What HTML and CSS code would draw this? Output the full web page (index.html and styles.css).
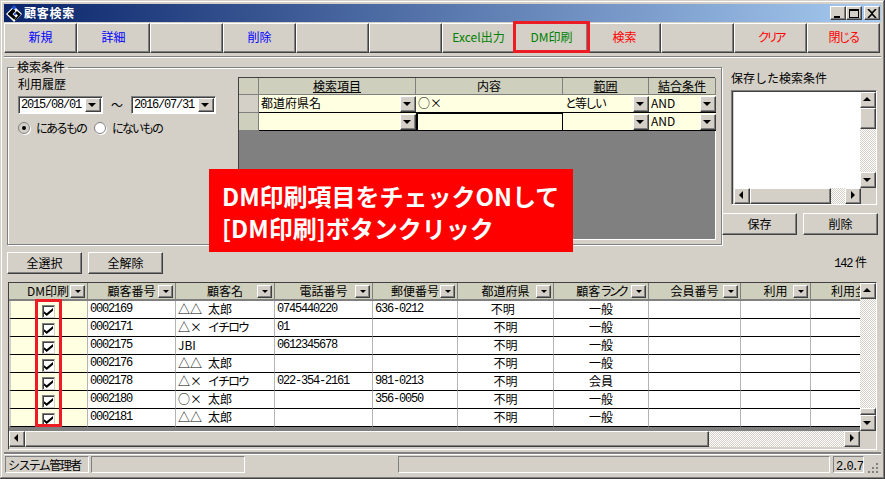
FILE: index.html
```html
<!DOCTYPE html>
<html lang="ja">
  <head>
    <meta charset="utf-8">
    <title>顧客検索</title>
    <link rel="stylesheet" href="styles.css">
  </head>

  <body>
    <div class="window">
      <div class="titlebar">
        <svg class="app-icon" width="16" height="17" viewBox="0 0 16 17">
          <path d="M8 1 16 9 8 17 0 9Z" fill="#fff"/>
          <path d="M1.5 9 7 3.5 9.5 6 6.5 9 10 12.5 8 14.5Z" fill="#000"/>
          <path d="M9 8 11 6 15 9.5 9.5 15.5 8.5 14.5 12 10.5Z" fill="#000"/>
          <path d="M8 0 10.5 2.5 8 5 5.5 2.5Z" fill="#1c4fd0"/>
          <path d="M7.5 9 9 7.5 10.5 9 9 10.5Z" fill="#1c4fd0"/>
        </svg>
        <span class="title-text">顧客検索</span>
        <div class="win-btns">
          <button class="win-btn"><i class="ico-min"></i></button>
          <button class="win-btn"><i class="ico-max"></i></button>
          <button class="win-btn win-close">
            <svg width="10" height="9" viewBox="0 0 10 9"><path d="M1 0 5 4 9 0M1 9 5 5 9 9" fill="none" stroke="#000" stroke-width="1.6"/></svg>
          </button>
        </div>
      </div>

      <div class="toolbar">
        <button class="btn blue">新規</button>
        <button class="btn blue">詳細</button>
        <button class="btn"></button>
        <button class="btn blue">削除</button>
        <button class="btn"></button>
        <button class="btn"></button>
        <button class="btn green">Excel出力</button>
        <button class="btn green marked">DM印刷</button>
        <button class="btn red">検索</button>
        <button class="btn"></button>
        <button class="btn red"><span class="tighter">クリア</span></button>
        <button class="btn red"><span class="tight">閉じる</span></button>
      </div>
      <div class="rule"></div>

      <div class="search">
        <fieldset class="group">
          <legend>検索条件</legend>
          <div class="history">
            <div class="history-label">利用履歴</div>
            <div class="dates">
              <div class="combo"><span class="num">2015/08/01</span><span class="sb-btn down"></span></div>
              <span class="tilde">～</span>
              <div class="combo"><span class="num">2016/07/31</span><span class="sb-btn down"></span></div>
            </div>
            <div class="radios">
              <span class="radio on"></span><span class="radio-text tight">にあるもの</span>
              <span class="radio"></span><span class="radio-text tight">にないもの</span>
            </div>
          </div>
          <div class="qgrid">
            <div class="qhead"></div>
            <div class="qhead"><u>検索項目</u></div>
            <div class="qhead">内容</div>
            <div class="qhead"><u>範囲</u></div>
            <div class="qhead"><u>結合条件</u></div>

            <div class="qrowhead"></div>
            <div class="qcell">都道府県名<span class="sb-btn down"></span></div>
            <div class="qcell">○×</div>
            <div class="qcell"><span class="tight">と等しい</span><span class="sb-btn down"></span></div>
            <div class="qcell">AND<span class="sb-btn down"></span></div>

            <div class="qrowhead alt"></div>
            <div class="qcell"><span class="sb-btn down"></span></div>
            <div class="qcell focus"></div>
            <div class="qcell"><span class="sb-btn down"></span></div>
            <div class="qcell">AND<span class="sb-btn down"></span></div>
          </div>
        </fieldset>

        <div class="saved">
          <div class="saved-label">保存した検索条件</div>
          <div class="listbox">
            <div class="list-top">
              <div class="list-white"></div>
              <div class="vscroll">
                <span class="sb-btn up"></span>
                <span class="sb-thumb list-thumb"></span>
                <span class="sb-track"></span>
                <span class="sb-btn down"></span>
              </div>
            </div>
            <div class="hscroll">
              <span class="sb-btn left"></span>
              <span class="sb-thumb list-hthumb"></span>
              <span class="sb-track"></span>
              <span class="sb-btn right"></span>
            </div>
          </div>
          <div class="saved-btns">
            <button class="btn">保存</button>
            <button class="btn">削除</button>
          </div>
        </div>
      </div>

      <div class="actions">
        <button class="btn">全選択</button>
        <button class="btn">全解除</button>
        <span class="count"><span class="num">142</span> 件</span>
      </div>

      <div class="table-frame">
        <div class="table-top">
          <div class="view">
            <table class="customers">
              <colgroup>
                <col class="c1"><col class="c2"><col class="c3"><col class="c4"><col class="c5">
                <col class="c6"><col class="c7"><col class="c8"><col class="c9"><col class="c10">
              </colgroup>
              <thead>
                <tr>
                  <th>DM印刷<i class="sort"></i></th>
                  <th>顧客番号<i class="sort"></i></th>
                  <th>顧客名<i class="sort"></i></th>
                  <th>電話番号<i class="sort"></i></th>
                  <th>郵便番号<i class="sort"></i></th>
                  <th>都道府県<i class="sort"></i></th>
                  <th>顧客<span class="tighter">ランク</span><i class="sort"></i></th>
                  <th>会員番号<i class="sort"></i></th>
                  <th>利用<i class="sort"></i></th>
                  <th>利用金額</th>
                </tr>
              </thead>
              <tbody>
                <tr>
                  <td class="chk"><span class="checkbox"></span></td>
                  <td class="num">0002169</td><td>△△&ensp;太郎</td><td class="num">0745440220</td><td class="num">636-0212</td>
                  <td class="mid">不明&nbsp;&nbsp;</td><td class="mid">一般</td><td></td><td></td><td></td>
                </tr>
                <tr>
                  <td class="chk"><span class="checkbox"></span></td>
                  <td class="num">0002171</td><td>△×&ensp;<span class="tight">イチロウ</span></td><td class="num">01</td><td></td>
                  <td class="mid">不明</td><td class="mid">一般</td><td></td><td></td><td></td>
                </tr>
                <tr>
                  <td class="chk"><span class="checkbox"></span></td>
                  <td class="num">0002175</td><td>JBI</td><td class="num">0612345678</td><td></td>
                  <td class="mid">不明</td><td class="mid">一般</td><td></td><td></td><td></td>
                </tr>
                <tr>
                  <td class="chk"><span class="checkbox"></span></td>
                  <td class="num">0002176</td><td>△△&ensp;太郎</td><td></td><td></td>
                  <td class="mid">不明</td><td class="mid">一般</td><td></td><td></td><td></td>
                </tr>
                <tr>
                  <td class="chk"><span class="checkbox"></span></td>
                  <td class="num">0002178</td><td>△×&ensp;<span class="tight">イチロウ</span></td><td class="num">022-354-2161</td><td class="num">981-0213</td>
                  <td class="mid">不明</td><td class="mid">会員</td><td></td><td></td><td></td>
                </tr>
                <tr>
                  <td class="chk"><span class="checkbox"></span></td>
                  <td class="num">0002180</td><td>○×&ensp;太郎</td><td></td><td class="num">356-0050</td>
                  <td class="mid">不明</td><td class="mid">一般</td><td></td><td></td><td></td>
                </tr>
                <tr>
                  <td class="chk"><span class="checkbox"></span></td>
                  <td class="num">0002181</td><td>△△&ensp;太郎</td><td></td><td></td>
                  <td class="mid">不明</td><td class="mid">一般</td><td></td><td></td><td></td>
                </tr>
              </tbody>
            </table>
            <div class="check-mark"></div>
          </div>
          <div class="vscroll">
            <span class="sb-btn up"></span>
            <span class="sb-track"></span>
            <span class="sb-thumb table-thumb"></span>
            <span class="sb-btn down"></span>
          </div>
        </div>
        <div class="hscroll">
          <span class="sb-btn left"></span>
          <span class="sb-thumb table-hthumb"></span>
          <span class="sb-track"></span>
          <span class="sb-btn right"></span>
          <span class="corner"></span>
        </div>
      </div>

      <div class="statusbar">
        <div class="panel p-user"><span class="status-text">システム管理者</span></div>
        <div class="panel p-a"></div>
        <div class="panel p-c"></div>
        <div class="panel p-ver"><span class="num">2.0.7</span></div>
        <div class="grip"></div>
      </div>

      <div class="callout">DM印刷項目をチェックONして<br>[DM印刷]ボタンクリック</div>
    </div>
  </body>
</html>
```

FILE: styles.css
```css
* {
  box-sizing: border-box;
}
body {
  margin: 0;
  background: #d4d0c8;
  font-family: "Noto Sans CJK JP", "Liberation Sans", sans-serif;
  font-size: 12px;
  line-height: 14px;
  color: #000;
}
.num {
  font-family: "Liberation Mono", "Noto Sans CJK JP", monospace;
  letter-spacing: -1.2px;
}
.tight {
  letter-spacing: -2px;
}
.tighter {
  letter-spacing: -3.5px;
}

/* window */
.window {
  position: relative;
  width: 885px;
  height: 479px;
  padding: 4px;
  display: flex;
  flex-direction: column;
  background: #d4d0c8;
  box-shadow: inset -1px -1px #404040, inset 1px 1px #d4d0c8, inset -2px -2px #808080, inset 2px 2px #fff;
  overflow: hidden;
}
.titlebar {
  height: 18px;
  flex-shrink: 0;
  display: flex;
  align-items: center;
  padding: 0 1px 0 2px;
  background: linear-gradient(to right, #0a246a, #a6caf0);
}
.app-icon {
  margin-right: 2px;
}
.title-text {
  color: #fff;
  font-weight: bold;
  letter-spacing: 0.75px;
}
.win-btns {
  margin-left: auto;
  display: flex;
}
.win-btn {
  width: 16px;
  height: 14px;
  padding: 0;
  display: flex;
  align-items: center;
  justify-content: center;
  background: #d4d0c8;
  border: 1px solid;
  border-color: #fff #404040 #404040 #fff;
  box-shadow: inset -1px -1px #808080;
}
.win-close {
  margin-left: 2px;
}
.ico-min {
  width: 6px;
  height: 2px;
  margin-top: 7px;
  margin-right: 2px;
  background: #000;
}
.ico-max {
  width: 10px;
  height: 9px;
  border: 1px solid #000;
  border-top-width: 2px;
}

/* buttons */
.btn {
  padding: 0;
  background: #d4d0c8;
  font: inherit;
  color: #000;
  border: 1px solid;
  border-color: #fff #404040 #404040 #fff;
  box-shadow: inset -1px -1px #808080;
}
.blue { color: #0000ff; }
.green { color: #008000; }
.red { color: #ff0000; }

.toolbar {
  margin-top: 1px;
  display: grid;
  grid-template-columns: repeat(12, 73px);
  height: 30px;
  flex-shrink: 0;
}
.toolbar .btn {
  padding-bottom: 2px;
}
.marked {
  position: relative;
}
.marked::after {
  content: "";
  position: absolute;
  left: -3px;
  right: -3px;
  top: -3px;
  bottom: -1px;
  border: 3px solid #ed1c24;
}
.rule {
  margin-top: 3px;
  height: 2px;
  flex-shrink: 0;
  border-top: 1px solid #808080;
  border-bottom: 1px solid #fff;
}

/* search area */
.search {
  display: flex;
  align-items: flex-start;
  height: 188px;
  flex-shrink: 0;
  padding: 2px 0 0 3px;
}
.group {
  width: 715px;
  height: 185px;
  margin: 0;
  padding: 3px 6px 6px 10px;
  display: flex;
  flex-shrink: 0;
  border: 1px solid #808080;
  box-shadow: inset 1px 1px #fff, 1px 1px #fff;
}
.group legend {
  margin-left: -4px;
  padding: 0 3px;
  line-height: 14px;
}
.history {
  width: 220px;
}
.history-label {
  height: 14px;
}
.dates {
  margin-top: 5px;
  display: flex;
  align-items: center;
}
.combo {
  width: 85px;
  height: 18px;
  padding: 0 1px 0 2px;
  display: flex;
  align-items: center;
  justify-content: space-between;
  background: #fff;
  border: 1px solid;
  border-color: #808080 #fff #fff #808080;
  box-shadow: inset 1px 1px #404040;
}
.combo .sb-btn {
  height: 14px;
}
.tilde {
  width: 28px;
  text-align: center;
}
.radios {
  margin-top: 7px;
  display: flex;
  align-items: center;
}
.radio {
  position: relative;
  flex-shrink: 0;
  width: 12px;
  height: 12px;
  border-radius: 50%;
  background: #fff;
  border: 1px solid #808080;
  box-shadow: 1px 1px #fff;
}
.radio.on {
  background: #d4d0c8;
}
.radio.on::after {
  content: "";
  position: absolute;
  left: 3px;
  top: 3px;
  width: 4px;
  height: 4px;
  border-radius: 50%;
  background: #000;
}
.radio-text {
  margin-left: 6px;
  width: 58px;
  white-space: nowrap;
}

/* condition grid */
.qgrid {
  width: 477px;
  height: 162px;
  display: grid;
  grid-template-columns: 20px 157px 147px 86px 67px;
  grid-template-rows: 17px 18px 18px;
  align-content: start;
  background: #808080;
  border-top: 1px solid #404040;
  border-left: 1px solid #404040;
  box-shadow: 1px 1px #fff;
}
.qhead {
  background: #cfcfbd;
  text-align: center;
  line-height: 16px;
  border-right: 1px solid #808080;
  border-bottom: 1px solid #808080;
}
.qrowhead {
  background: #d4d0c8;
  border-right: 1px solid #808080;
  border-bottom: 1px solid #808080;
}
.qrowhead.alt {
  background: #cfcfbd;
}
.qcell {
  display: flex;
  align-items: center;
  justify-content: space-between;
  padding: 0 0 2px 2px;
  background: #ffffe1;
  border-bottom: 1px solid #000;
  line-height: 14px;
}
.qcell .sb-btn {
  margin: 0 0 -2px auto;
}
.qcell.focus {
  border: 1px solid #000;
  border-left-width: 2px;
}

/* saved conditions */
.saved {
  width: 156px;
  margin-top: 11px;
  display: flex;
  flex-direction: column;
  align-items: flex-end;
  flex-shrink: 0;
}
.saved-label {
  width: 146px;
  height: 14px;
  margin-right: 1px;
  white-space: nowrap;
}
.listbox {
  width: 146px;
  height: 115px;
  margin: 5px 1px 0 0;
  padding: 1px 0 1px 1px;
  border: 1px solid;
  border-color: #808080 #fff #fff #808080;
  box-shadow: inset 1px 1px #404040;
}
.list-top {
  display: flex;
  height: 96px;
  margin-left: 1px;
}
.list-white {
  flex: 1;
  background: #fff;
}
.saved-btns {
  width: 156px;
  margin-top: 8px;
  display: flex;
  justify-content: space-between;
}
.saved-btns .btn {
  width: 75px;
  height: 22px;
}

/* scrollbars */
.vscroll {
  width: 16px;
  flex-shrink: 0;
  display: flex;
  flex-direction: column;
}
.hscroll {
  height: 16px;
  flex-shrink: 0;
  display: flex;
}
.sb-btn, .sb-thumb, .sort {
  display: block;
  background: #d4d0c8;
  border: 1px solid;
  border-color: #fff #404040 #404040 #fff;
  box-shadow: inset -1px -1px #808080;
}
.sb-btn {
  position: relative;
  width: 16px;
  height: 16px;
  flex-shrink: 0;
}
.sb-btn::after {
  content: "";
  position: absolute;
  left: 50%;
  top: 50%;
  width: 0;
  height: 0;
  border: 4px solid transparent;
}
.sb-btn.down::after {
  margin: -2px 0 0 -5px;
  border-top-color: #000;
  border-bottom-width: 0;
}
.sb-btn.up::after {
  margin: -3px 0 0 -5px;
  border-bottom-color: #000;
  border-top-width: 0;
}
.sb-btn.left::after {
  margin: -5px 0 0 -3px;
  border-right-color: #000;
  border-left-width: 0;
}
.sb-btn.right::after {
  margin: -5px 0 0 -2px;
  border-left-color: #000;
  border-right-width: 0;
}
.sb-track {
  flex: 1;
  background: repeating-conic-gradient(#d4d0c8 0 25%, #fff 0 50%) 0 0 / 2px 2px;
}
.list-thumb {
  height: 21px;
}
.list-hthumb {
  width: 81px;
}
.table-thumb {
  height: 7px;
}
.table-hthumb {
  width: 684px;
}
.list-top + .hscroll {
  width: 127px;
  margin-left: 1px;
}

/* actions */
.actions {
  height: 22px;
  flex-shrink: 0;
  margin-top: 6px;
  padding-left: 3px;
  display: flex;
}
.actions .btn {
  width: 75px;
  margin-right: 6px;
}
.count {
  margin-left: auto;
  margin-right: 14px;
  align-self: center;
}

/* customer table */
.table-frame {
  width: 869px;
  height: 168px;
  margin: 8px 0 0 4px;
  flex-shrink: 0;
  border: 1px solid;
  border-color: #404040 #fff #fff #404040;
}
.table-top {
  display: flex;
  height: 148px;
}
.view {
  position: relative;
  width: 851px;
  overflow: hidden;
  background: #808080;
}
.customers {
  width: 891px;
  table-layout: fixed;
  border-collapse: separate;
  border-spacing: 0;
}
.c1 { width: 79px; }
.c2 { width: 88px; }
.c3 { width: 99px; }
.c4 { width: 98px; }
.c5 { width: 85px; }
.c6 { width: 96px; }
.c7 { width: 95px; }
.c8 { width: 92px; }
.c9 { width: 70px; }
.c10 { width: 89px; }
.customers th {
  position: relative;
  height: 18px;
  padding: 0;
  background: #cfcfbd;
  font-weight: normal;
  text-align: center;
  white-space: nowrap;
  border-right: 1px solid #808080;
  border-bottom: 2px solid #808080;
}
.sort {
  position: absolute;
  right: 2px;
  top: 2px;
  width: 15px;
  height: 13px;
}
.sort::after {
  content: "";
  position: absolute;
  left: 4px;
  top: 4px;
  border: 3px solid transparent;
  border-top-color: #000;
  border-bottom-width: 0;
}
.customers td {
  height: 18px;
  padding: 0 0 2px 2px;
  background: #fff;
  white-space: nowrap;
  overflow: hidden;
  border-right: 1px solid #b4b4b4;
  border-bottom: 1px solid #000;
}
.customers td.num {
  padding-bottom: 1px;
}
.customers td.mid {
  text-align: center;
  padding: 0 0 2px;
}
.customers td.chk {
  padding: 0;
  background: #ffffe1;
  border-left: 2px solid #d4d0c8;
  vertical-align: top;
}
.checkbox {
  display: block;
  position: relative;
  width: 13px;
  height: 13px;
  margin: 4px 0 0 31px;
  background: #fff;
  border: 1px solid #808080;
  border-right-color: #d4d0c8;
  border-bottom-color: #d4d0c8;
  box-shadow: inset 1px 1px #404040;
}
.checkbox::after {
  content: "";
  position: absolute;
  left: 1px;
  top: 2px;
  width: 9px;
  height: 8px;
  background: #000;
  clip-path: polygon(0 40%, 30% 65%, 100% 0, 100% 35%, 30% 100%, 0 70%);
}
.check-mark {
  position: absolute;
  left: 26px;
  top: 16px;
  width: 27px;
  height: 128px;
  border: 3px solid #ed1c24;
}
.corner {
  width: 16px;
  background: #d4d0c8;
}

/* status bar */
.statusbar {
  margin-top: 2px;
  padding-top: 2px;
  flex-shrink: 0;
  display: flex;
  align-items: flex-start;
  height: 21px;
  border-top: 2px solid #808080;
  border-top-style: double;
  box-shadow: inset 0 1px #fff;
}
.panel {
  height: 17px;
  line-height: 15px;
  padding-left: 2px;
  white-space: nowrap;
  border: 1px solid;
  border-color: #808080 #fff #fff #808080;
}
.status-text {
  letter-spacing: -1.6px;
}
.p-user { width: 84px; margin-left: 1px; margin-right: 2px; }
.p-a { width: 154px; margin-right: 153px; }
.p-c { width: 432px; }
.p-ver { width: 31px; margin-left: 3px; padding-left: 2px; }
.p-ver .num { letter-spacing: -2px; }
.grip {
  width: 14px;
  height: 14px;
  margin: 3px 0 0 2px;
  background: repeating-conic-gradient(#808080 0 25%, transparent 0 100%) 0 0 / 4px 4px;
  clip-path: polygon(100% 0, 100% 100%, 0 100%);
}

/* annotation */
.callout {
  position: absolute;
  left: 209px;
  top: 169px;
  width: 364px;
  height: 83px;
  padding: 11px 0 0 13px;
  background: #ff0000;
  color: #fff;
  font-size: 24px;
  font-weight: bold;
  line-height: 32px;
  white-space: nowrap;
}
```
